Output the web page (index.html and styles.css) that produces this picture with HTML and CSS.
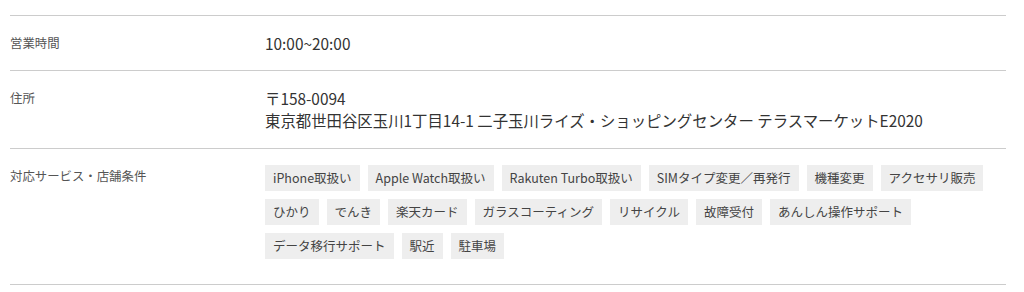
FILE: index.html
```html
<!DOCTYPE html>
<html lang="ja">
<head>
<meta charset="utf-8">
<link rel="stylesheet" href="styles.css">
</head>
<body>
<dl class="info">
  <div class="row">
    <dt class="label">営業時間</dt>
    <dd class="value">10:00~20:00</dd>
  </div>
  <div class="row row-address">
    <dt class="label">住所</dt>
    <dd class="value">〒158-0094<br>東京都世田谷区玉川1丁目14-1 二子玉川ライズ・ショッピングセンター テラスマーケットE2020</dd>
  </div>
  <div class="row row-tags">
    <dt class="label">対応サービス・店舗条件</dt>
    <dd class="value">
      <ul class="tags">
        <li class="tag">iPhone取扱い</li>
        <li class="tag">Apple Watch取扱い</li>
        <li class="tag">Rakuten Turbo取扱い</li>
        <li class="tag">SIMタイプ変更／再発行</li>
        <li class="tag">機種変更</li>
        <li class="tag">アクセサリ販売</li>
        <li class="tag">ひかり</li>
        <li class="tag">でんき</li>
        <li class="tag">楽天カード</li>
        <li class="tag">ガラスコーティング</li>
        <li class="tag">リサイクル</li>
        <li class="tag">故障受付</li>
        <li class="tag">あんしん操作サポート</li>
        <li class="tag">データ移行サポート</li>
        <li class="tag">駅近</li>
        <li class="tag">駐車場</li>
      </ul>
    </dd>
  </div>
</dl>
</body>
</html>
```
FILE: styles.css
```css
html, body {
  margin: 0;
  padding: 0;
  background: #fff;
}
body {
  font-family: "Noto Sans CJK JP", "Noto Sans", sans-serif;
  color: #333;
}
.info {
  margin: 15px 18px 0 10px;
  border-top: 1px solid #cccccc;
}
.row {
  display: flex;
  border-bottom: 1px solid #cccccc;
  padding: 16px 0 16px;
}
.row-address {
  padding-bottom: 17px;
}
.row-tags {
  padding-bottom: 17px;
}
.label {
  width: 255px;
  flex: none;
  margin: 0;
  font-size: 12.4px;
  line-height: 22px;
  color: #555;
}
.value {
  margin: 0;
  flex: 1;
  font-size: 15.4px;
  line-height: 22px;
  color: #333;
}
.tags {
  list-style: none;
  margin: 0;
  padding: 0;
  display: flex;
  flex-wrap: wrap;
  column-gap: 8px;
}
.tag {
  background: #eeeeee;
  color: #444;
  font-size: 12.5px;
  line-height: 18px;
  padding: 4px 8px;
  margin-bottom: 8px;
}
```
